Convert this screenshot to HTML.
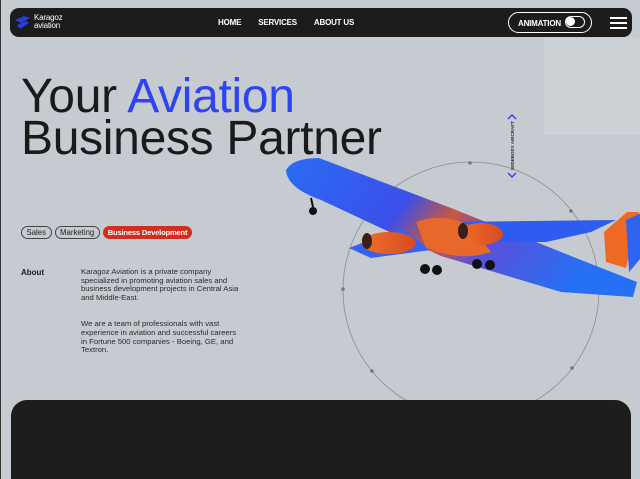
<!DOCTYPE html>
<html><head><meta charset="utf-8"><style>
*{margin:0;padding:0;box-sizing:border-box}
html,body{width:640px;height:479px;overflow:hidden}
body{background:#c6cbd1;font-family:"Liberation Sans",sans-serif;position:relative;border-left:1px solid #333}
.nav{position:absolute;left:9px;top:8px;width:622px;height:29px;background:#1c1c1d;border-radius:9px;color:#fff}
.nav .logo{position:absolute;left:24px;top:6px;font-size:8px;line-height:8px;letter-spacing:-.2px}
.nav .links{position:absolute;left:208px;top:10px;font-size:8px;font-weight:bold;letter-spacing:-.2px}
.nav .links span{margin-right:17px}
.anim{position:absolute;left:498px;top:4px;width:84px;height:21px;border:1.5px solid #fff;border-radius:11px;font-size:8px;font-weight:bold;padding:6px 0 0 9px;letter-spacing:-.2px}
.tog{position:absolute;right:6px;top:3px;width:20px;height:12px;border:1.5px solid #fff;border-radius:7px}
.tog:before{content:"";position:absolute;left:0;top:0;width:9px;height:9px;border-radius:50%;background:#fff}
.burger{position:absolute;left:600px;top:9px;width:17px}
.burger i{display:block;height:1.5px;background:#fff;margin-bottom:3.5px}
.h1{position:absolute;left:20px;top:76px;font-size:48px;line-height:42px;color:#1a1a1a;letter-spacing:-0.3px}
.h1 b{font-weight:normal;color:#2d44f0}
.panel{position:absolute;left:543px;top:38px;width:97px;height:97px;background:#ccd1d6}
.tags{position:absolute;left:20px;top:226px;font-size:7.8px}
.tags span{display:inline-block;border:1px solid #444;border-radius:7px;padding:1px 4.5px;margin-right:3px;color:#222;height:13px}
.tags span.r{background:#d42d1e;border-color:#d42d1e;color:#fff;font-weight:bold;font-size:7.6px;padding:1px 4px;letter-spacing:-.2px}
.about{position:absolute;left:20px;top:268px;font-size:8px;font-weight:bold;color:#1a1a1a}
.txt{position:absolute;left:80px;top:268px;width:162px;font-size:7.7px;line-height:8.7px;color:#2a2a2a}
.dark{position:absolute;left:10px;top:400px;width:620px;height:90px;background:#1d1d1e;border-radius:16px 16px 0 0}
</style></head><body>
<div class="panel"></div>
<div class="nav">
 <svg style="position:absolute;left:4px;top:7px" width="18" height="16" viewBox="0 0 18 16"><path d="M1 5 L10 1 L16 3 L7 8 Z" fill="#2a3ce0"/><path d="M3 10 L12 6 L15 8 L6 14 Z" fill="#2a3ce0"/></svg>
 <div class="logo">Karagoz<br>aviation</div>
 <div class="links"><span>HOME</span><span>SERVICES</span><span>ABOUT US</span></div>
 <div class="anim">ANIMATION<div class="tog"></div></div>
 <div class="burger"><i></i><i></i><i></i></div>
</div>
<div class="h1">Your <b>Aviation</b><br>Business Partner</div>
<svg style="position:absolute;left:0;top:0" width="640" height="479">
 <circle cx="470" cy="290" r="128" fill="none" stroke="#8a8d92" stroke-width="0.8"/>
 <circle cx="469" cy="163" r="1.8" fill="#777"/><circle cx="570" cy="211" r="1.8" fill="#777"/><circle cx="342" cy="289" r="1.8" fill="#777"/><circle cx="371" cy="371" r="1.8" fill="#777"/><circle cx="571" cy="368" r="1.8" fill="#777"/>
 <defs>
  <linearGradient id="f" x1="0" y1="0" x2="1" y2="0.3"><stop offset="0" stop-color="#2a6cf5"/><stop offset="0.4" stop-color="#3c4fe8"/><stop offset="0.55" stop-color="#c8583e"/><stop offset="0.7" stop-color="#5a50d8"/><stop offset="1" stop-color="#2570f5"/></linearGradient>
  <linearGradient id="e" x1="0" y1="0" x2="1" y2="0"><stop offset="0" stop-color="#f0702a"/><stop offset="1" stop-color="#d84a20"/></linearGradient>
 </defs>
 <path d="M603 232 L626 212 L638 212 L625 268 L605 262 Z" fill="#ee6a22"/>
 <path d="M625 220 L640 213 L640 258 L628 272 Z" fill="#3063f0"/>
 <path d="M285 170 Q292 158 318 158 L450 208 L580 260 L636 282 L632 297 L560 292 L440 256 L320 200 Q286 188 285 170 Z" fill="url(#f)"/>
 <path d="M450 222 L615 220 L590 232 L545 242 L490 242 Z" fill="#2f5cf0"/>
 <path d="M348 248 L400 228 L430 250 L370 258 Z" fill="#3a60ee"/>
 <path d="M415 222 Q440 212 470 226 L490 252 Q460 262 425 248 Z" fill="#e8682c"/>
 <ellipse cx="388" cy="243" rx="27" ry="11" fill="url(#e)"/><ellipse cx="366" cy="241" rx="5" ry="8" fill="#3a1f18"/>
 <ellipse cx="480" cy="234" rx="22" ry="11" fill="url(#e)"/><ellipse cx="462" cy="231" rx="5" ry="8" fill="#3a1f18"/>
 <path d="M310 198 L312 207" stroke="#111" stroke-width="2"/>
 <circle cx="312" cy="211" r="4" fill="#111"/><circle cx="424" cy="269" r="5" fill="#111"/><circle cx="436" cy="270" r="5" fill="#111"/><circle cx="476" cy="264" r="5" fill="#111"/><circle cx="489" cy="265" r="5" fill="#111"/>
 <path d="M507 119 L511 115 L515 119" fill="none" stroke="#2d44f0" stroke-width="1.5"/>
 <path d="M507 173 L511 177 L515 173" fill="none" stroke="#2d44f0" stroke-width="1.5"/>
 <text transform="translate(513,170) rotate(-90)" font-size="4.5" font-family="Liberation Sans" font-weight="bold" fill="#333">WIDEBODY AIRCRAFT</text>
</svg>
<div class="tags"><span>Sales</span><span>Marketing</span><span class="r">Business Development</span></div>
<div class="about">About</div>
<div class="txt">Karagoz Aviation is a private company specialized in promoting aviation sales and business development projects in Central Asia and Middle-East.<br><br><br>We are a team of professionals with vast experience in aviation and successful careers in Fortune 500 companies - Boeing, GE, and Textron.</div>
<div class="dark"></div>
</body></html>
